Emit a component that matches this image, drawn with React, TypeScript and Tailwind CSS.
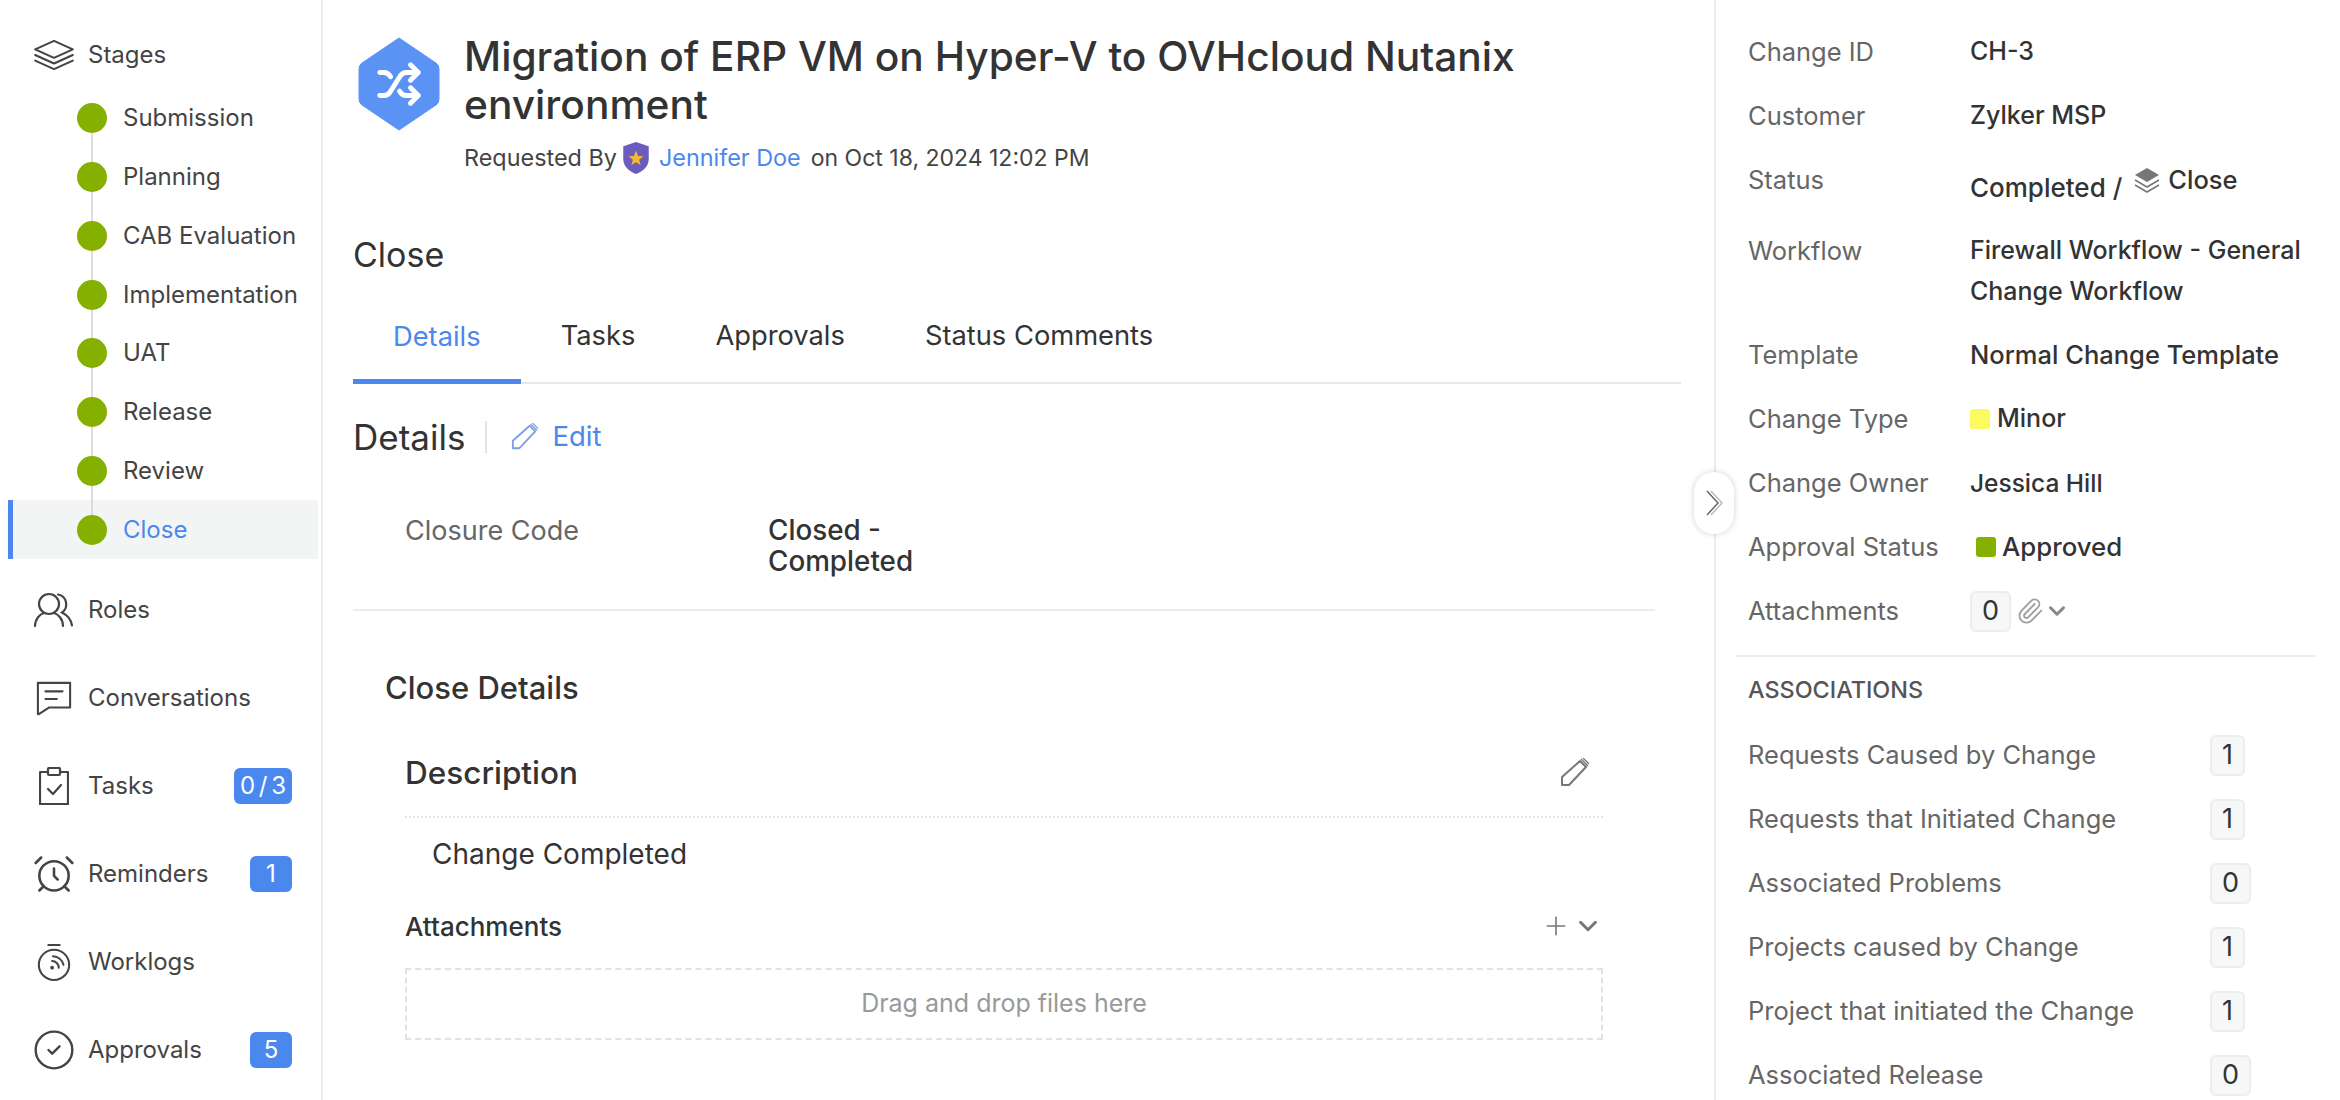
import { AlarmClock, ChevronDown, CircleCheck, Paperclip, Plus, Shuffle } from 'lucide-react'

const stages = ['Submission', 'Planning', 'CAB Evaluation', 'Implementation', 'UAT', 'Release', 'Review', 'Close']

const summary = [
  { label: 'Change ID', value: 'CH-3' },
  { label: 'Customer', value: 'Zylker MSP' },
]

const associations = [
  { label: 'Requests Caused by Change', count: 1 },
  { label: 'Requests that Initiated Change', count: 1 },
  { label: 'Associated Problems', count: 0 },
  { label: 'Projects caused by Change', count: 1 },
  { label: 'Project that initiated the Change', count: 1 },
  { label: 'Associated Release', count: 0 },
]

const LayersIcon = ({ className }: { className?: string }) => (
  <svg viewBox="0 0 46 34" fill="none" stroke="currentColor" strokeWidth="2.2" strokeLinejoin="round" strokeLinecap="round" className={className}>
    <path d="M23 2 43 11 23 20 3 11Z" />
    <path d="M3 17 23 26 43 17" />
    <path d="M3 23 23 32 43 23" />
  </svg>
)

const RolesIcon = () => (
  <svg viewBox="0 0 40 36" fill="none" stroke="currentColor" strokeWidth="2.2" strokeLinecap="round" className="w-[40px] h-[36px]">
    <circle cx="15" cy="12" r="10" />
    <path d="M1 34c0-7 5-12 9-13M29 34c0-7-5-12-9-13" />
    <path d="M24 2.500a10 10 0 0 1 4 18c4 2 9 6 10 13" />
  </svg>
)

const ChatIcon = () => (
  <svg viewBox="0 0 40 38" fill="none" stroke="currentColor" strokeWidth="2.2" strokeLinejoin="round" strokeLinecap="round" className="w-[38px] h-[36px]">
    <path d="M3 3h34v26H15L4 36H3Z" />
    <path d="M11 12h18M11 20h12" />
  </svg>
)

const ClipboardIcon = () => (
  <svg viewBox="0 0 30 38" fill="none" stroke="currentColor" strokeWidth="2.2" strokeLinejoin="round" strokeLinecap="round" className="w-[30px] h-[38px]">
    <path d="M9 5H1v32h28V5h-8" />
    <rect x="9" y="1" width="12" height="7" rx="1" />
    <path d="M9 22l5 5 8-9" />
  </svg>
)

const WorklogIcon = () => (
  <svg viewBox="0 0 38 42" fill="none" stroke="currentColor" strokeWidth="2.2" strokeLinecap="round" className="w-[36px] h-[40px]">
    <path d="M13 3h12" />
    <circle cx="19" cy="24" r="16" />
    <circle cx="17" cy="27" r="2" fill="currentColor" stroke="none" />
    <path d="M17 20a7 7 0 0 1 7 7M18 15a12 12 0 0 1 11 9" />
  </svg>
)

const PencilIcon = ({ className }: { className?: string }) => (
  <svg viewBox="0 0 30 30" fill="none" stroke="currentColor" strokeWidth="2" strokeLinejoin="round" className={className}>
    <path d="M2 19 20 3l6 6-17 18H2Z" />
    <path d="M21 1l7 7M23 0l6 6" strokeWidth="1.4" />
  </svg>
)

const Count = ({ n }: { n: number }) => (
  <span className="flex items-center justify-center h-[41px] px-[10px] min-w-[34px] rounded-[6px] border-2 border-[#ededed] bg-[#f6f7f7] text-[27px] text-[#333]">
    {n}
  </span>
)

const NavItem = ({ icon, label, badge }: { icon: React.ReactNode; label: string; badge?: string }) => (
  <div className="flex items-center h-[88px] pl-[34px] pr-[29px] text-[#444]">
    <span className="flex items-center justify-center w-[40px] mr-[14px]">{icon}</span>
    <span className="flex-1 text-[24px]">{label}</span>
    {badge && (
      <span className="flex items-center justify-center h-[36px] min-w-[42px] px-[6px] rounded-[6px] bg-[#4a88ee] text-white text-[24px] [word-spacing:-3px]">
        {badge}
      </span>
    )}
  </div>
)

export default function App() {
  return (
    <div className="relative flex h-[1100px] w-[2340px] overflow-hidden bg-white font-['Inter',sans-serif]">
      {/* Left nav */}
      <aside className="w-[323px] shrink-0 border-r-2 border-[#ececec] pt-[32px]">
        <div className="flex items-center h-[46px] pl-[32px] text-[#444]">
          <LayersIcon className="w-[44px] h-[32px] mr-[12px]" />
          <span className="text-[24px]">Stages</span>
        </div>
        <div className="relative mt-[11px]">
          <div className="absolute left-[91px] top-[29px] bottom-[29px] w-[2px] bg-[#dcdcdc]" />
          {stages.map((stage) => {
            const active = stage === 'Close'
            return (
              <div
                key={stage}
                className={
                  active
                    ? 'flex items-center h-[58.75px] ml-[8px] w-[310px] border-l-[5px] border-[#4a88ee] bg-[#f3f5f5] pl-[64px]'
                    : 'flex items-center h-[58.75px] pl-[77px]'
                }
              >
                <span className="relative w-[30px] h-[30px] rounded-full bg-[#85b000]" />
                <span className={active ? 'ml-[16px] text-[24px] text-[#4a88ee]' : 'ml-[16px] text-[24px] text-[#444]'}>{stage}</span>
              </div>
            )
          })}
        </div>
        <div className="mt-[7px]">
          <NavItem icon={<RolesIcon />} label="Roles" />
          <NavItem icon={<ChatIcon />} label="Conversations" />
          <NavItem icon={<ClipboardIcon />} label="Tasks" badge="0 / 3" />
          <NavItem icon={<AlarmClock className="w-[44px] h-[44px] shrink-0" strokeWidth={1.4} />} label="Reminders" badge="1" />
          <NavItem icon={<WorklogIcon />} label="Worklogs" />
          <NavItem icon={<CircleCheck className="w-[44px] h-[44px] shrink-0" strokeWidth={1.3} />} label="Approvals" badge="5" />
        </div>
      </aside>

      {/* Main column */}
      <main className="w-[1391px] shrink-0 pl-[30px] pt-[33px]">
        <div className="flex">
          <div className="relative mt-[4px] ml-[5px] mr-[24px] w-[82px] h-[94px] shrink-0">
            <svg viewBox="0 0 82 94" className="w-full h-full">
              <path d="M41 1 78 26Q81 28 81 32V62Q81 66 78 68L41 93 4 68Q1 66 1 62V32Q1 28 4 26Z" fill="#5b93f5" stroke="#5b93f5" strokeLinejoin="round" />
            </svg>
            <Shuffle className="absolute left-[18px] top-[24px] w-[46px] h-[46px] text-white" strokeWidth={2.6} />
          </div>
          <div>
            <h1 className="w-[1200px] text-[40.700px] leading-[48px] font-medium text-[#333]">
              Migration of ERP VM on Hyper-V to OVHcloud Nutanix environment
            </h1>
            <div className="flex items-center h-[34px] mt-[12px] text-[23.400px] text-[#444]">
              <span>Requested By</span>
              <svg viewBox="0 0 26 32" className="w-[28px] h-[34px] ml-[5px]">
                <path d="M13 1 25 5v12c0 7-6 12-12 14C7 29 1 24 1 17V5Z" fill="#6a5bbd" />
                <path d="M13 9l2 5 5 .4-4 3.3 1.300 5L13 20l-4.300 2.700 1.300-5-4-3.300 5-.4Z" fill="#f4b92f" />
              </svg>
              <span className="ml-[9px] text-[#4a88ee]">Jennifer Doe</span>
              <span className="ml-[10px] text-[23px]">on Oct 18, 2024 12:02 PM</span>
            </div>
          </div>
        </div>

        <h2 className="mt-[60px] h-[40px] leading-[40px] text-[34px] text-[#333]">Close</h2>

        {/* Tabs */}
        <div className="flex mt-[15px] h-[94px] w-[1328px] border-b-2 border-[#e8e8e8] text-[27.300px] text-[#333]">
          <div className="flex items-center h-[94px] px-[40px] pt-[5px] border-b-[5px] border-[#4a88ee] text-[#4a88ee]">Details</div>
          <div className="flex items-center px-[40px]">Tasks</div>
          <div className="flex items-center px-[40px]">Approvals</div>
          <div className="flex items-center px-[40px]">Status Comments</div>
        </div>

        <div className="flex items-center mt-[31px] h-[44px]">
          <span className="text-[35px] text-[#333]">Details</span>
          <span className="w-[2px] h-[32px] ml-[20px] bg-[#e2e2e2]" />
          <PencilIcon className="w-[28px] h-[28px] ml-[24px] text-[#7c9fe6]" />
          <span className="ml-[13px] text-[27.500px] text-[#4a88ee]">Edit</span>
        </div>

        <div className="flex mt-[56px] pl-[52px] text-[27px] leading-[31px]">
          <span className="w-[363px] text-[#666]">Closure Code</span>
          <span className="w-[195px] text-[27.800px] font-medium text-[#333]">Closed - Completed</span>
        </div>
        <div className="w-[1302px] mt-[32px] border-t-2 border-[#ececec]" />

        <h3 className="mt-[57px] pl-[32px] h-[40px] leading-[40px] text-[31px] font-medium text-[#333]">Close Details</h3>

        <div className="w-[1198px] ml-[52px]">
          <div className="flex items-center justify-between h-[66px] mt-[44px] pb-[22px] border-b-2 border-dotted border-[#e4e4e4]">
            <span className="text-[31.500px] font-medium text-[#333]">Description</span>
            <PencilIcon className="w-[30px] h-[30px] mr-[13px] text-[#777]" />
          </div>
          <div className="mt-[18px] pl-[27px] h-[36px] leading-[36px] text-[28px] text-[#333]">Change Completed</div>
          <div className="flex items-center justify-between h-[34px] mt-[37px]">
            <span className="text-[26px] font-medium text-[#333]">Attachments</span>
            <span className="flex items-center gap-[2px] text-[#777]">
              <Plus className="w-[30px] h-[30px]" strokeWidth={1.3} />
              <ChevronDown className="w-[30px] h-[30px]" strokeWidth={2.4} />
            </span>
          </div>
          <div className="flex items-center justify-center h-[72px] mt-[25px] border-2 border-dashed border-[#e2e2e2] text-[25px] text-[#999]">
            Drag and drop files here
          </div>
        </div>
      </main>

      {/* Right panel */}
      <section className="flex-1 border-l-2 border-[#ececec] pt-[20px] text-[25.500px]">
        {summary.map((row) => (
          <div key={row.label} className="flex items-center h-[64px] pl-[32px]">
            <span className="w-[222px] text-[#666]">{row.label}</span>
            <span className="text-[25px] font-medium text-[#333]">{row.value}</span>
          </div>
        ))}
        <div className="flex items-center h-[64px] pl-[32px]">
          <span className="w-[222px] text-[#666]">Status</span>
          <span className="mt-[14px] text-[26px] font-medium text-[#333]">Completed /</span>
          <svg viewBox="0 0 26 28" className="w-[26px] h-[28px] ml-[12px] text-[#777]">
            <path d="M13 2 25 9 13 16 1 9Z" fill="currentColor" />
            <path d="M1 14l12 7 12-7M1 19l12 7 12-7" fill="none" stroke="currentColor" strokeWidth="1.600" />
          </svg>
          <span className="ml-[8px] text-[25.500px] font-medium text-[#333]">Close</span>
        </div>
        <div className="flex h-[111px] pl-[32px] pt-[18px] leading-[41px]">
          <span className="w-[222px] text-[#666]">Workflow</span>
          <span className="w-[350px] text-[25px] font-medium text-[#333]">Firewall Workflow - General Change Workflow</span>
        </div>
        <div className="flex items-center h-[64px] pl-[32px]">
          <span className="w-[222px] text-[#666]">Template</span>
          <span className="text-[25.500px] font-medium text-[#333]">Normal Change Template</span>
        </div>
        <div className="flex items-center h-[64px] pl-[32px]">
          <span className="w-[222px] text-[#666]">Change Type</span>
          <span className="w-[20px] h-[20px] rounded-[3px] bg-[#fbfb5f]" />
          <span className="ml-[7px] text-[25px] font-medium text-[#333]">Minor</span>
        </div>
        <div className="flex items-center h-[64px] pl-[32px]">
          <span className="w-[222px] text-[#666]">Change Owner</span>
          <span className="text-[24.500px] font-medium text-[#333]">Jessica Hill</span>
        </div>
        <div className="flex items-center h-[64px] pl-[32px]">
          <span className="w-[228px] text-[#666]">Approval Status</span>
          <span className="w-[20px] h-[20px] rounded-[3px] bg-[#85b000]" />
          <span className="ml-[6px] text-[25.800px] font-medium text-[#333]">Approved</span>
        </div>
        <div className="flex items-center h-[64px] pl-[32px]">
          <span className="w-[222px] text-[#666]">Attachments</span>
          <Count n={0} />
          <Paperclip className="w-[28px] h-[34px] ml-[5px] text-[#a0a0a0]" strokeWidth={1.6} />
          <ChevronDown className="w-[26px] h-[26px] text-[#888]" strokeWidth={2.8} />
        </div>
        <div className="w-[579px] ml-[20px] mt-[12px] border-t-2 border-[#ececec]" />
        <div className="flex items-center h-[66px] pl-[32px] text-[23.400px] font-medium text-[#555]">ASSOCIATIONS</div>
        {associations.map((a) => (
          <div key={a.label} className="flex items-center h-[64px] pl-[32px]">
            <span className="w-[462px] text-[#666]">{a.label}</span>
            <Count n={a.count} />
          </div>
        ))}
      </section>

      {/* Collapse handle sits over the panel border */}
      <button className="absolute left-[1694px] top-[472px] flex items-center justify-center w-[40px] h-[62px] rounded-full bg-white shadow-[0_0_6px_rgba(0,0,0,0.18)] text-[#666]">
        <svg viewBox="0 0 18 30" fill="none" stroke="currentColor" strokeWidth="1.500" className="w-[18px] h-[30px]">
          <path d="M2 3 13 15 2 27" />
          <path d="M6 3 17 15 6 27" stroke="#bbb" />
        </svg>
      </button>
    </div>
  )
}
